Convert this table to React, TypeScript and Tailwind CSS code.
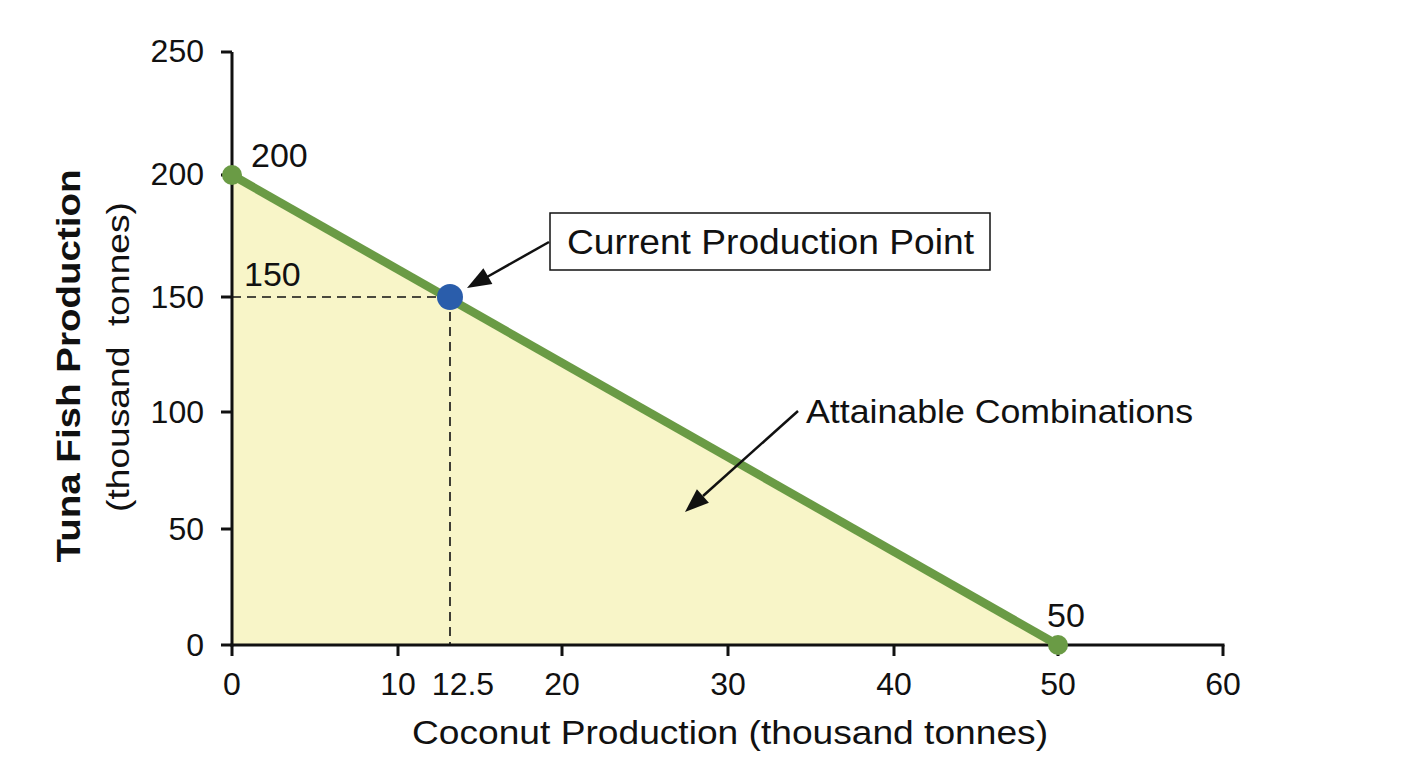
const yTicks = [
  { label: '250', y: 52, base: 62 },
  { label: '200', y: 175, base: 185 },
  { label: '150', y: 297, base: 308 },
  { label: '100', y: 412, base: 423 },
  { label: '50', y: 529, base: 540 },
  { label: '0', y: 645, base: 656 },
]

const xTicks = [
  { label: '0', x: 232, tick: true },
  { label: '10', x: 398, tick: true },
  { label: '12.5', x: 463, tick: false },
  { label: '20', x: 562, tick: true },
  { label: '30', x: 728, tick: true },
  { label: '40', x: 894, tick: true },
  { label: '50', x: 1058, tick: true },
  { label: '60', x: 1223, tick: true },
]

const green = '#6a9b45'

export default function App() {
  return (
    <div className="w-[1408px] h-[768px] bg-white overflow-hidden">
      <svg
        width={1408}
        height={768}
        viewBox="0 0 1408 768"
        className="block font-['Liberation_Sans',Arial,sans-serif] text-black"
      >
        {/* attainable area */}
        <polygon points="232,175 1058,645 232,645" fill="#f8f5c8" />

        {/* dashed guides */}
        <line x1={232} y1={297} x2={450} y2={297} stroke="#111" strokeWidth={1.6} strokeDasharray="9 6" />
        <line x1={450} y1={297} x2={450} y2={645} stroke="#111" strokeWidth={1.6} strokeDasharray="9 6" />

        {/* axes */}
        <line x1={232} y1={52} x2={232} y2={646.5} stroke="#111" strokeWidth={3} />
        <line x1={230.5} y1={645} x2={1224.5} y2={645} stroke="#111" strokeWidth={3} />
        {yTicks.map((t) => (
          <line key={t.label} x1={221} y1={t.y} x2={232} y2={t.y} stroke="#111" strokeWidth={3} />
        ))}
        {xTicks
          .filter((t) => t.tick)
          .map((t) => (
            <line key={t.label} x1={t.x} y1={645} x2={t.x} y2={656} stroke="#111" strokeWidth={3} />
          ))}

        {/* tick labels */}
        {yTicks.map((t) => (
          <text key={t.label} x={204} y={t.base} fontSize={32} textAnchor="end" fill="#111">
            {t.label}
          </text>
        ))}
        {xTicks.map((t) => (
          <text key={t.label} x={t.x} y={695} fontSize={32} textAnchor="middle" fill="#111">
            {t.label}
          </text>
        ))}

        {/* PPF line */}
        <line x1={232} y1={175} x2={1058} y2={645} stroke={green} strokeWidth={8.5} />
        <circle cx={232} cy={175} r={10} fill={green} />
        <circle cx={1058} cy={645} r={10} fill={green} />
        <circle cx={450} cy={297} r={13} fill="#2a5dab" />

        {/* point labels */}
        <text x={251} y={167} fontSize={34} fill="#111">200</text>
        <text x={244} y={286} fontSize={34} fill="#111">150</text>
        <text x={1047} y={627} fontSize={34} fill="#111">50</text>

        {/* current production callout */}
        <rect x={550} y={213} width={440} height={57} fill="white" stroke="#111" strokeWidth={1.5} />
        <text x={567} y={254} fontSize={35} textLength={407} lengthAdjust="spacingAndGlyphs" fill="#111">
          Current Production Point
        </text>
        <line x1={549} y1={242} x2={487} y2={277} stroke="#111" strokeWidth={2.5} />
        <polygon points="467,288 492.4,283.9 483.4,268.3" fill="#111" />

        {/* attainable callout */}
        <text x={806} y={423} fontSize={34} textLength={387} lengthAdjust="spacingAndGlyphs" fill="#111">
          Attainable Combinations
        </text>
        <line x1={798} y1={411} x2={703} y2={496} stroke="#111" strokeWidth={2.5} />
        <polygon points="685,512 708.9,502.7 696.9,489.3" fill="#111" />

        {/* axis titles */}
        <text
          transform="translate(80,366) rotate(-90)"
          fontSize={34}
          fontWeight={700}
          textAnchor="middle"
          textLength={393}
          lengthAdjust="spacingAndGlyphs"
          fill="#111"
        >
          Tuna Fish Production
        </text>
        <text
          transform="translate(129,357) rotate(-90)"
          fontSize={32}
          textAnchor="middle"
          textLength={310}
          lengthAdjust="spacingAndGlyphs"
          className="whitespace-pre"
          fill="#111"
        >
          (thousand  tonnes)
        </text>
        <text x={730} y={744} fontSize={33} textAnchor="middle" textLength={636} lengthAdjust="spacingAndGlyphs" fill="#111">
          Coconut Production (thousand tonnes)
        </text>
      </svg>
    </div>
  )
}
